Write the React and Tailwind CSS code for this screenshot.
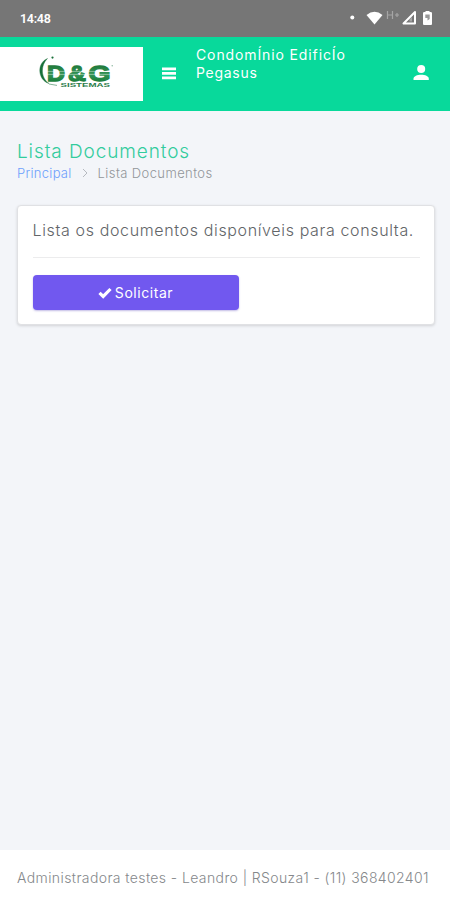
import React from "react";

function StatusBar() {
  return (
    <div className="flex h-[37px] shrink-0 items-center bg-[#767676] pl-5 pr-[17px] text-white">
      <span className="font-[Roboto] text-[12.5px] font-semibold leading-4 tracking-[-0.3px]">14:48</span>
      <svg className="ml-auto h-[24px] w-[84px]" viewBox="0 0 84 24" fill="none">
        <circle cx="3.3" cy="10.5" r="2" fill="#fff" />
        <path d="M17.5 8Q25.5 1.5 33.5 8L25.5 17.5Z" fill="#fff" />
        <path d="M38.5 4V12M43.5 4V12M38.5 8H43.5M46 8H50M48 6V10" stroke="#a5a5a5" strokeWidth="1.2" />
        <path d="M54.5 16.5H66V5Z" stroke="#fff" strokeWidth="2" strokeLinejoin="round" />
        <path d="M60.5 12.5L63 10V14.5H60.5Z" fill="#fff" opacity="0.35" />
        <path d="M75.3 5H76.5V4H80.5V5H81.7Q83 5 83 6.3V17Q83 18 82 18H75Q74 18 74 17V6.3Q74 5 75.3 5Z" fill="#fff" />
        <path d="M76.3 7.5H80.7V12L78.5 13.5V11H76.3Z" fill="#999" />
      </svg>
    </div>
  );
}

function Logo() {
  return (
    <svg className="ml-[37px] h-[38px] w-[80px]" viewBox="0 0 80 38">
      <defs>
        <linearGradient id="brand" x1="0" y1="0" x2="0" y2="1">
          <stop offset="0" stopColor="#146b2c" />
          <stop offset="0.55" stopColor="#349456" />
          <stop offset="1" stopColor="#08702b" />
        </linearGradient>
      </defs>
      <path d="M10.5 5.5C-.5 10 .5 27 12 30.5C4 25 3 13 10.5 5.5Z" fill="#187039" stroke="#187039" strokeWidth="0.4" />
      <path d="M12 31L20 32.4" stroke="#83b298" strokeWidth="1" />
      <circle cx="15.5" cy="4.6" r="1.1" fill="#187039" />
      <g fontFamily="Liberation Sans, sans-serif" fontWeight="700" fontSize="22" fill="url(#brand)" stroke="url(#brand)" strokeWidth="1.3">
        <text x="10" y="27.6" textLength="18" lengthAdjust="spacingAndGlyphs">D</text>
        <text x="31" y="27.6" textLength="18" lengthAdjust="spacingAndGlyphs">&amp;</text>
        <text x="51.5" y="27.6" textLength="22" lengthAdjust="spacingAndGlyphs">G</text>
      </g>
      <path d="M9 18.4H74M9 21.4H74" stroke="#fff" strokeWidth="0.6" opacity="0.7" />
      <text x="23.5" y="34" textLength="49.5" lengthAdjust="spacingAndGlyphs" fontFamily="Liberation Sans, sans-serif" fontWeight="700" fontSize="5.2" fill="#2c7d4a">SISTEMAS</text>
      <circle cx="75.2" cy="12.8" r="0.7" fill="#83b298" />
    </svg>
  );
}

function Header() {
  return (
    <header className="flex h-[74px] shrink-0 items-start bg-[#08d99b] text-white">
      <div className="mt-[10px] flex h-[54px] w-[143px] shrink-0 items-start bg-white pt-[6px]">
        <Logo />
      </div>
      <svg className="ml-[19px] mt-[30px] h-[13px] w-[14px] shrink-0" viewBox="0 0 14 13" fill="#fff">
        <path d="M0 .4H14V3.2H0ZM0 4.9H14V7.7H0ZM0 9.4H14V12.2H0Z" />
      </svg>
      <div className="ml-[20px] mt-[9px] text-[14px] leading-[18px]">
        <div className="whitespace-nowrap tracking-[0.88px]">CondomÍnio EdificÍo</div>
        <div className="whitespace-nowrap tracking-[0.72px]">Pegasus</div>
      </div>
      <svg className="ml-auto mr-[21px] mt-[28px] h-[16px] w-[16px]" viewBox="0 0 16 16" fill="#fff">
        <circle cx="8.2" cy="4" r="4" />
        <path d="M.5 15V13.8C.5 11.3 4.3 9.8 8.2 9.8S15.8 11.3 15.8 13.8V15Z" />
      </svg>
    </header>
  );
}

export default function App() {
  return (
    <div className="flex h-[900px] w-[450px] flex-col overflow-hidden bg-[#f3f5f9] font-[Inter,sans-serif]">
      <StatusBar />
      <Header />
      <main className="flex-1 pl-[17px] pr-[15px] pt-[29px]">
        <h1 className="whitespace-nowrap text-[19px] font-light leading-[24px] tracking-[0.9px] text-[#32cc9d]">Lista Documentos</h1>
        <nav className="flex h-[18px] items-center whitespace-nowrap text-[13px] font-light leading-[18px]">
          <span className="tracking-[0.28px] text-[#6d9ffc]">Principal</span>
          <svg className="ml-[9px] mr-[9px] h-[10px] w-[8px]" viewBox="0 0 8 10" fill="none" stroke="#b6bac0">
            <path d="M2 1L6 5L2 9" />
          </svg>
          <span className="tracking-[0.4px] text-[#929599]">Lista Documentos</span>
        </nav>
        <section className="mt-[23px] h-[120px] rounded-[4px] border border-[#e0e1e4] bg-white px-[14.5px] pt-[14px] shadow-[0_1px_3px_rgba(0,0,0,0.14)]">
          <p className="whitespace-nowrap text-[16px] font-light leading-[20px] tracking-[0.64px] text-[#626568]">Lista os documentos disponíveis para consulta.</p>
          <hr className="mt-[17px] border-[#ececed]" />
          <button className="mt-[17px] flex h-[35px] w-[206px] items-center justify-center gap-[3px] rounded-[4px] bg-[#7158ef] text-[14px] text-white shadow-[0_1px_2px_rgba(80,60,180,0.35)]">
            <svg className="h-[12px] w-[14px]" viewBox="0 0 14 12" fill="none" stroke="#fff" strokeWidth="3.2">
              <path d="M1.5 5.8L5.2 9.4L12.5 2" />
            </svg>
            <span className="leading-[18px] tracking-[0.55px]">Solicitar</span>
          </button>
        </section>
      </main>
      <footer className="flex h-[50px] shrink-0 items-center bg-white pl-[17px] pt-[5px]">
        <span className="whitespace-nowrap text-[14px] font-light tracking-[0.4px] text-[#85888b]">Administradora testes - Leandro | RSouza1 - (11) 368402401</span>
      </footer>
    </div>
  );
}
